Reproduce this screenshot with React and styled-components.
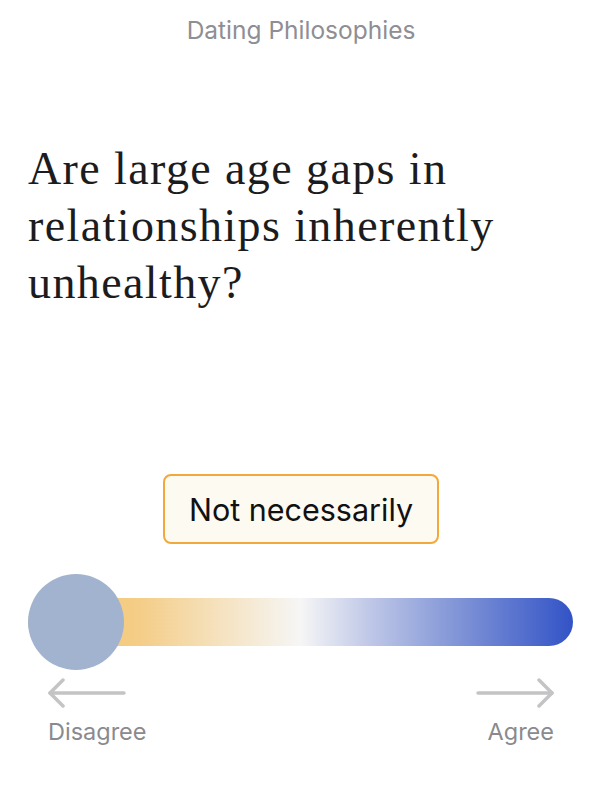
import styled, { createGlobalStyle } from "styled-components";

const GlobalStyle = createGlobalStyle`
  html, body {
    margin: 0;
    padding: 0;
    background: #ffffff;
  }
`;

const Screen = styled.div`
  width: 602px;
  height: 788px;
  display: flex;
  flex-direction: column;
  font-family: Inter, "Liberation Sans", sans-serif;
  box-sizing: border-box;
`;

const Category = styled.div`
  margin-top: 14px;
  text-align: center;
  font-size: 24.5px;
  line-height: 32px;
  color: #8e8e93;
`;

const Question = styled.h1`
  margin: 94px 0 0;
  padding: 0 28px;
  font-family: "Liberation Serif", "DejaVu Serif", serif;
  font-weight: 400;
  font-size: 46px;
  letter-spacing: 1.4px;
  line-height: 57px;
  color: #1c1c1e;
`;

const Answer = styled.div`
  align-self: center;
  margin-top: 163px;
  padding: 0 24px;
  height: 66px;
  display: flex;
  align-items: center;
  border: 2px solid #f2a93b;
  border-radius: 8px;
  background: #fdfaf2;
  font-size: 30.5px;
  color: #111;
`;

const Slider = styled.div`
  position: relative;
  margin: 30px 29px 0 28px;
  height: 96px;
  display: flex;
  align-items: center;
`;

/* runs the full width; the knob sits over its left end */
const Track = styled.div`
  flex: 1;
  height: 48px;
  border-radius: 24px;
  background: linear-gradient(
    to right,
    #f3c46e 0%,
    #f4cd86 20%,
    #f6f6f6 50%,
    #c2cae8 62%,
    #8b9dd9 76%,
    #3253c6 100%
  );
`;

const Knob = styled.div`
  position: absolute;
  left: 0;
  top: 0;
  width: 96px;
  height: 96px;
  border-radius: 50%;
  background: #a2b3cf;
`;

const Ends = styled.div`
  margin-top: 8px;
  padding: 0 48px;
  display: flex;
  justify-content: space-between;
`;

const End = styled.div`
  display: flex;
  flex-direction: column;
  align-items: ${(p) => (p.right ? "flex-end" : "flex-start")};
  gap: 9px;
  font-size: 23.5px;
  color: #8a8a8e;
`;

function Arrow({ right }) {
  return (
    <svg width="78" height="30" viewBox="0 0 78 30" fill="none">
      <g
        stroke="#c4c4c6"
        strokeWidth="3.5"
        strokeLinecap="round"
        strokeLinejoin="round"
        transform={right ? "translate(78 0) scale(-1 1)" : undefined}
      >
        <path d="M2 15 H76" />
        <path d="M15 2 L2 15 L15 28" />
      </g>
    </svg>
  );
}

export default function App() {
  return (
    <Screen>
      <GlobalStyle />
      <Category>Dating Philosophies</Category>
      <Question>
        Are large age gaps in relationships inherently unhealthy?
      </Question>
      <Answer>Not necessarily</Answer>
      <Slider>
        <Track />
        <Knob />
      </Slider>
      <Ends>
        <End>
          <Arrow />
          Disagree
        </End>
        <End right>
          <Arrow right />
          Agree
        </End>
      </Ends>
    </Screen>
  );
}
